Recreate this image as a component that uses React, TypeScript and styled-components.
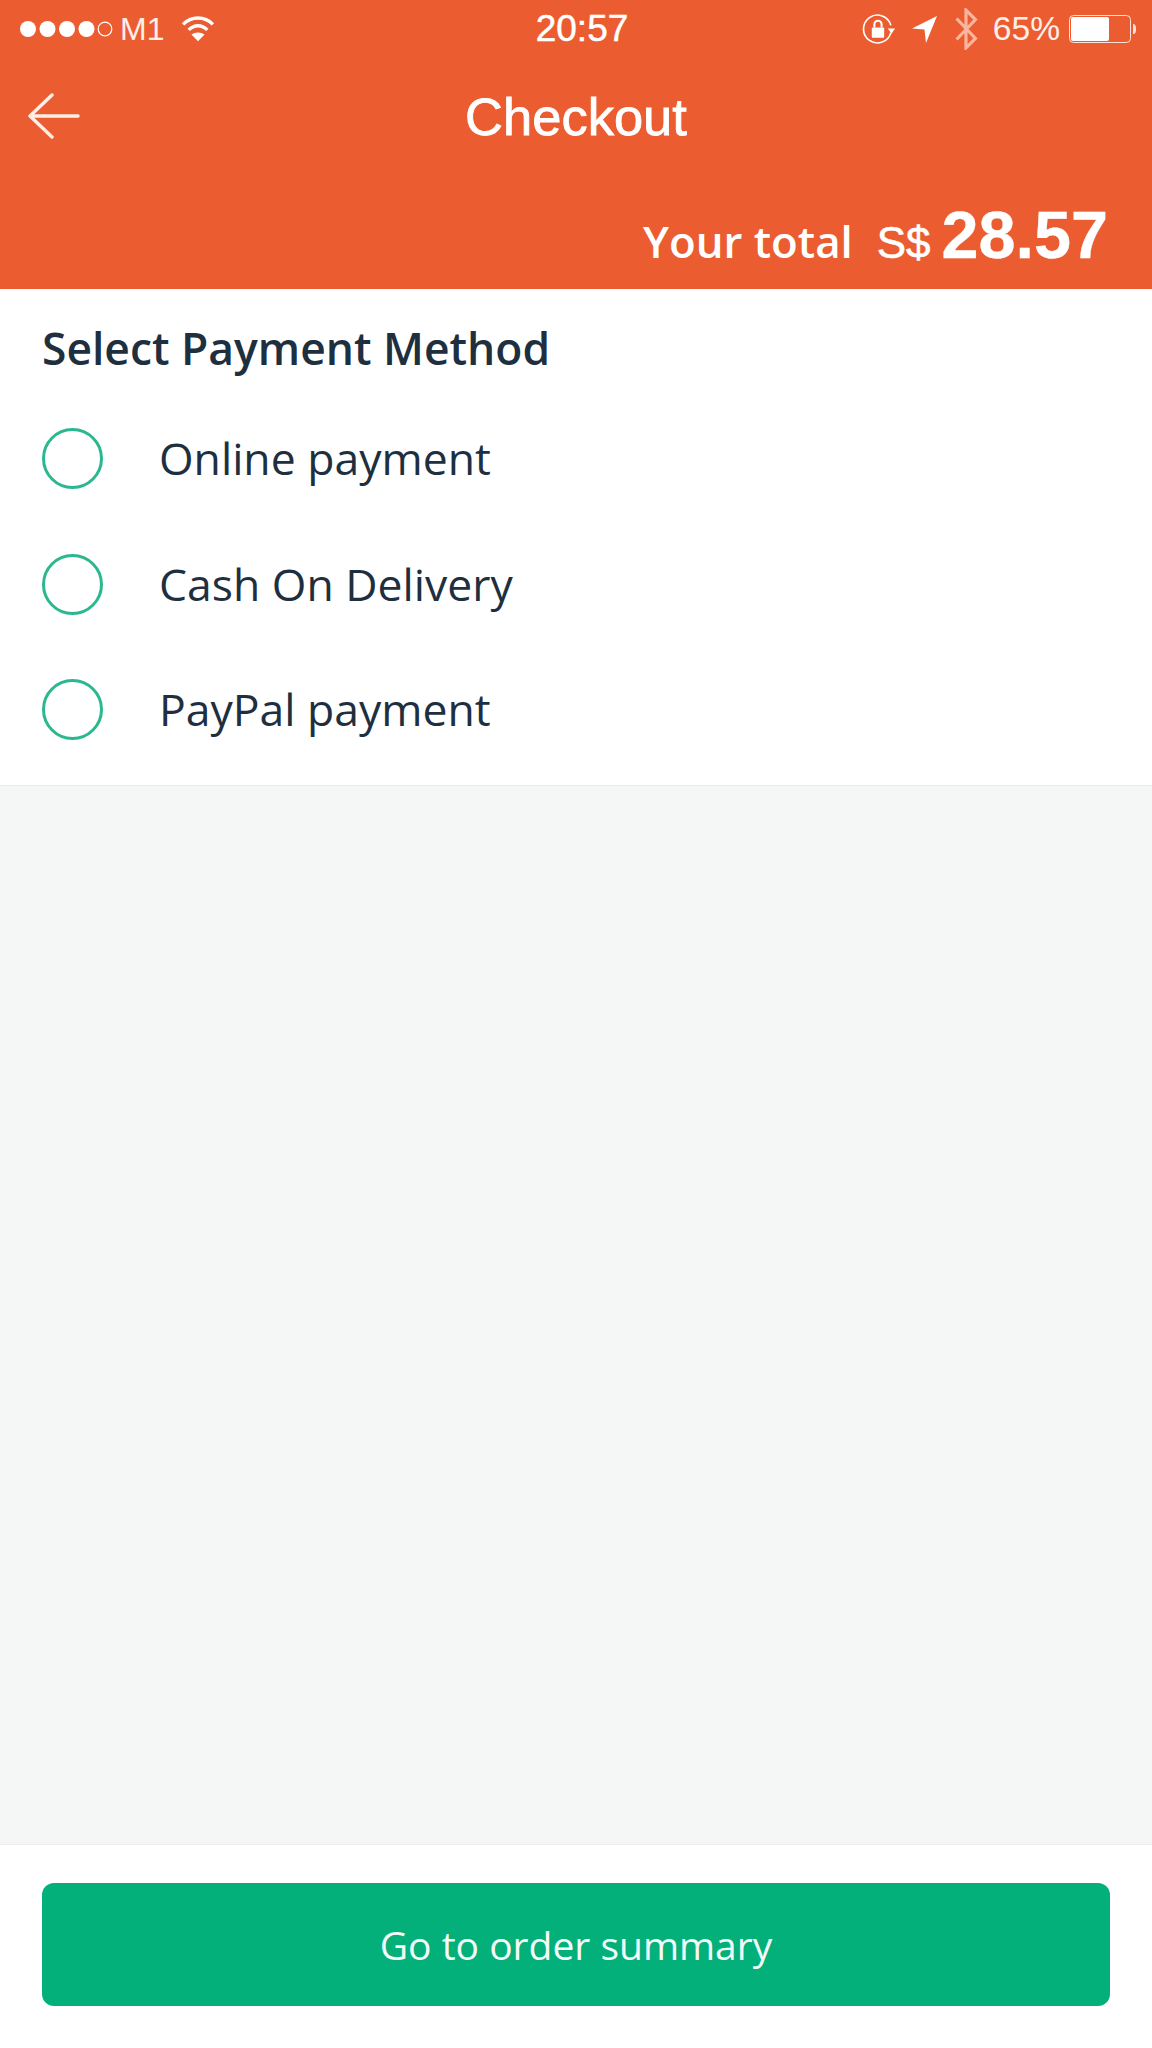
import React from 'react';
import styled, { createGlobalStyle } from 'styled-components';

const GlobalStyle = createGlobalStyle`
  html, body { margin: 0; padding: 0; }
  body { background: #fff; font-family: 'Open Sans', sans-serif; }
  * { box-sizing: border-box; }
`;

const Screen = styled.div`
  width: 1152px;
  height: 2048px;
  display: flex;
  flex-direction: column;
  background: #f5f7f7;
  overflow: hidden;
`;

const Header = styled.header`
  height: 289px;
  flex: none;
  background: #eb5d30;
  color: #fff;
  display: flex;
  flex-direction: column;
  font-family: 'Liberation Sans', Arial, sans-serif;
`;

const StatusBar = styled.div`
  height: 56px;
  padding: 2px 15px 0 18px;
  display: grid;
  grid-template-columns: 1fr auto 1fr;
  align-items: center;
  font-size: 33px;
  color: #fdeee8;
`;

const StatusLeft = styled.div`
  display: flex;
  align-items: center;
`;

const StatusRight = styled.div`
  display: flex;
  align-items: center;
  justify-content: flex-end;
`;

const Clock = styled.div`
  font-size: 37px;
  -webkit-text-stroke: 0.5px #fff;
  color: #fff;
  margin-left: 9px;
`;

const Carrier = styled.span`
  font-size: 32px;
  margin: 0 17px 0 6px;
`;

const Percent = styled.span`
  font-size: 33.6px;
  margin: 0 9px 0 15px;
`;

const IconGap = styled.span<{ $width: number }>`
  width: ${props => props.$width}px;
`;

const NavBar = styled.div`
  height: 120px;
  flex: none;
  padding-left: 28px;
  display: grid;
  grid-template-columns: 52px 1fr 80px;
  align-items: center;
`;

const Title = styled.h1`
  margin: 0;
  font-size: 52.5px;
  font-weight: 400;
  -webkit-text-stroke: 0.8px #fff;
  text-align: center;
`;

const TotalRow = styled.div`
  flex: 1;
  display: flex;
  justify-content: flex-end;
  align-items: baseline;
  padding: 0 44px 0 0;
  line-height: 90px;
  margin-top: 14px;
`;

const TotalLabel = styled.span`
  font-family: 'Open Sans', sans-serif;
  font-size: 43.8px;
  font-weight: 600;
  margin-right: 24px;
`;

const Currency = styled.span`
  font-size: 44px;
  -webkit-text-stroke: 0.6px #fff;
  margin-right: 11px;
`;

const Amount = styled.span`
  font-size: 66.5px;
  font-weight: 700;
  -webkit-text-stroke: 0.4px #fff;
`;

const Panel = styled.section`
  height: 497px;
  flex: none;
  background: #fff;
  border-bottom: 1px solid #e9ebeb;
  padding: 29px 42px 0;
  color: #1e2f40;
`;

const PanelTitle = styled.h2`
  margin: 0 0 18px;
  font-size: 44.4px;
  line-height: 60px;
  font-weight: 600;
`;

const MethodList = styled.div`
  display: flex;
  flex-direction: column;
`;

const Method = styled.label`
  height: 125.4px;
  display: flex;
  align-items: center;
  gap: 56px;
  font-size: 44.5px;
`;

const MethodName = styled.span`
  margin-top: -2px;
`;

const Radio = styled.span`
  width: 61px;
  height: 61px;
  flex: none;
  border: 3px solid #2bb78f;
  border-radius: 50%;
`;

const Spacer = styled.div`
  flex: 1;
`;

const Footer = styled.footer`
  height: 204px;
  flex: none;
  background: #fff;
  border-top: 1px solid #eceeee;
  padding: 38px 42px 0;
`;

const PrimaryButton = styled.button`
  width: 1068px;
  height: 123px;
  border: 0;
  border-radius: 12px;
  background: #03b07a;
  color: #f2fbf8;
  font-family: 'Open Sans', sans-serif;
  font-size: 39px;
`;

const Dots = () => (
  <svg width="96" height="20" viewBox="0 0 96 20">
    {[10, 29.5, 49, 68.5].map(cx => <circle key={cx} cx={cx} cy="10" r="8" fill="#fff" />)}
    <circle cx="87" cy="10" r="6.8" fill="none" stroke="#fff" strokeWidth="1.2" />
  </svg>
);

const Wifi = () => (
  <svg width="34" height="28" viewBox="0 0 36 30" fill="none" stroke="#fff" strokeWidth="3.6">
    <path d="M2 10C11 1 25 1 34 10" />
    <path d="M8 16C14 10 22 10 28 16" />
    <path d="M18 28L11 21C15 18 21 18 25 21Z" fill="#fff" stroke="none" />
  </svg>
);

const RotationLock = () => (
  <svg width="33" height="33" viewBox="0 0 32 32" fill="none" stroke="#fff" strokeWidth="1.6">
    <path d="M28 19A13.5 13.5 0 1 1 28 12" />
    <path d="M25 15L32 15L28.5 20Z" fill="#fff" stroke="none" />
    <rect x="9.5" y="14" width="12" height="10" rx="1" fill="#fff" stroke="none" />
    <path d="M12 14V11A3.5 3.5 0 0 1 19 11V14" strokeWidth="2" />
  </svg>
);

const LocationArrow = () => (
  <svg width="26" height="28" viewBox="0 0 26 28">
    <path d="M25 1L0 13.5L12.5 14.5L14 28Z" fill="#fff" />
  </svg>
);

const Bluetooth = () => (
  <svg width="24" height="42" viewBox="0 0 22 40" fill="none" stroke="#f9b59d" strokeWidth="3">
    <path d="M2 10L20 29L11 38V2L20 11L2 30" />
  </svg>
);

const Battery = () => (
  <svg width="68" height="30" viewBox="0 0 68 30">
    <rect x="0.5" y="1.5" width="61" height="27" rx="4" fill="none" stroke="#fde3d9" strokeWidth="1" />
    <rect x="2" y="3" width="38" height="24" rx="2" fill="#fff" />
    <path d="M64 10C66.5 10 67 12 67 15C67 18 66.5 20 64 20Z" fill="#fde3d9" />
  </svg>
);

const BackArrow = () => (
  <svg width="52" height="46" viewBox="0 0 52 46" fill="none" stroke="#fdeee8" strokeWidth="3.4" strokeLinecap="round" strokeLinejoin="round">
    <path d="M50 23H2M24 2L2 23L24 44" />
  </svg>
);

const METHODS = ['Online payment', 'Cash On Delivery', 'PayPal payment'];

export default function App() {
  return (
    <Screen>
      <GlobalStyle />
      <Header>
        <StatusBar>
          <StatusLeft>
            <Dots />
            <Carrier>M1</Carrier>
            <Wifi />
          </StatusLeft>
          <Clock>20:57</Clock>
          <StatusRight>
            <RotationLock />
            <IconGap $width={17} />
            <LocationArrow />
            <IconGap $width={16} />
            <Bluetooth />
            <Percent>65%</Percent>
            <Battery />
          </StatusRight>
        </StatusBar>
        <NavBar>
          <BackArrow />
          <Title>Checkout</Title>
        </NavBar>
        <TotalRow>
          <TotalLabel>Your total</TotalLabel>
          <Currency>S$</Currency>
          <Amount>28.57</Amount>
        </TotalRow>
      </Header>
      <Panel>
        <PanelTitle>Select Payment Method</PanelTitle>
        <MethodList>
          {METHODS.map(name => (
            <Method key={name}>
              <Radio />
              <MethodName>{name}</MethodName>
            </Method>
          ))}
        </MethodList>
      </Panel>
      <Spacer />
      <Footer>
        <PrimaryButton>Go to order summary</PrimaryButton>
      </Footer>
    </Screen>
  );
}
